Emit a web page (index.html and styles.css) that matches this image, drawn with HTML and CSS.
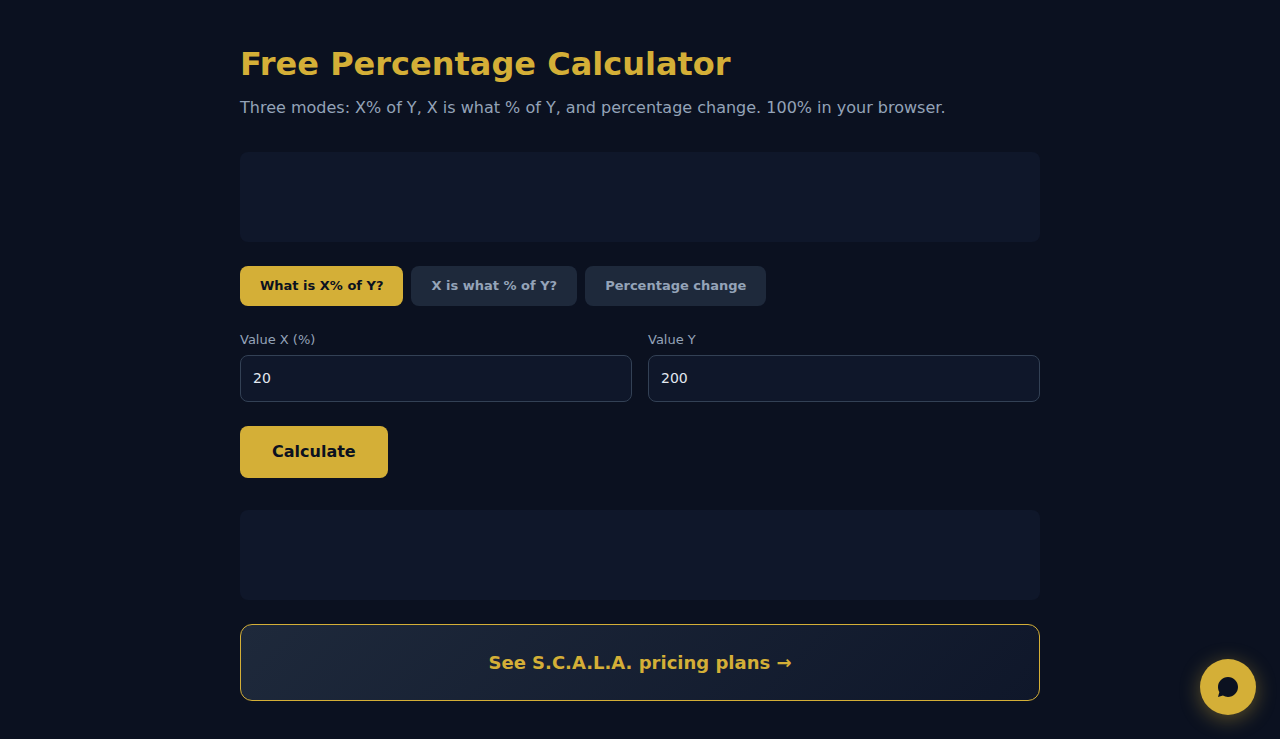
FILE: index.html
```html
<!DOCTYPE html>
<html lang="en">
<head>
<meta charset="UTF-8">
<meta name="viewport" content="width=device-width, initial-scale=1.0">
<title>Free Percentage Calculator</title>
<link rel="stylesheet" href="styles.css">
</head>
<body>

<main class="container">
    <h1>Free Percentage Calculator</h1>
    <p class="subtitle">Three modes: X% of Y, X is what % of Y, and percentage change. 100% in your browser.</p>

    <div class="ad-slot"></div>

    <!-- Mode tabs -->
    <div class="tabs">
        <button type="button" class="tab active" data-x="Value X (%)" data-y="Value Y">What is X% of Y?</button>
        <button type="button" class="tab" data-x="Value X" data-y="Value Y">X is what % of Y?</button>
        <button type="button" class="tab" data-x="From" data-y="To">Percentage change</button>
    </div>

    <form id="calc">
        <div class="row">
            <div class="field">
                <label for="x" id="label-x">Value X (%)</label>
                <input type="number" id="x" value="20" step="any">
            </div>
            <div class="field">
                <label for="y" id="label-y">Value Y</label>
                <input type="number" id="y" value="200" step="any">
            </div>
        </div>
        <button type="submit" class="btn">Calculate</button>
        <output class="result" id="result" for="x y"></output>
    </form>

    <div class="ad-slot"></div>

    <a href="#pricing" class="cta">See S.C.A.L.A. pricing plans →</a>
</main>

<!-- Chat button -->
<button type="button" class="chat-btn" aria-label="Open chat">
    <svg width="24" height="24" viewBox="0 0 24 24" fill="currentColor" aria-hidden="true">
        <path d="M12 2C6.48 2 2 6.48 2 12c0 1.85.5 3.58 1.38 5.06L2 22l4.94-1.38C8.42 21.5 10.15 22 12 22c5.52 0 10-4.48 10-10S17.52 2 12 2z"/>
    </svg>
</button>

<script>
const tabs = document.querySelectorAll(".tab");
const result = document.getElementById("result");
let mode = 0;

tabs.forEach((tab, i) => {
    tab.addEventListener("click", () => {
        tabs.forEach(t => t.classList.remove("active"));
        tab.classList.add("active");
        document.getElementById("label-x").textContent = tab.dataset.x;
        document.getElementById("label-y").textContent = tab.dataset.y;
        result.textContent = "";
        mode = i;
    });
});

document.getElementById("calc").addEventListener("submit", e => {
    e.preventDefault();
    const x = parseFloat(document.getElementById("x").value);
    const y = parseFloat(document.getElementById("y").value);
    let value = x * y / 100;
    if (mode === 1) value = x / y * 100;
    if (mode === 2) value = (y - x) / x * 100;
    result.textContent = Number.isFinite(value) ? value.toFixed(2) + (mode ? "%" : "") : "-";
});
</script>

</body>
</html>
```
FILE: styles.css
```css
:root {
    --gold: #d4af37;
    --bg: #0b1120;
    --panel: #0f172a;
    --slate: #1e293b;
    --border: #334155;
    --muted: #94a3b8;
    --text: #e2e8f0;
    --radius: 8px;
}

* {
    box-sizing: border-box;
}

body {
    margin: 0;
    font-family: "DejaVu Sans", sans-serif;
    background: var(--bg);
    color: var(--text);
    line-height: 1.5;
}

.container {
    max-width: 848px;
    margin: 0 auto;
    padding: 40px 24px 32px;
}

h1 {
    margin: 0 0 8px;
    font-size: 32px;
    color: var(--gold);
}

.subtitle {
    margin: 0 0 32px;
    color: var(--muted);
}

.ad-slot {
    min-height: 90px;
    margin: 0 0 24px;
    background: var(--panel);
    border-radius: var(--radius);
}

.tabs {
    display: flex;
    flex-wrap: wrap;
    gap: 8px;
    margin-bottom: 24px;
}

button {
    font-family: inherit;
    border: none;
    cursor: pointer;
}

.tab {
    height: 40px;
    padding: 0 20px 2px;
    font-size: 13px;
    font-weight: 600;
    color: var(--muted);
    background: var(--slate);
    border-radius: var(--radius);
}

.tab.active {
    color: var(--bg);
    background: var(--gold);
}

.row {
    display: grid;
    grid-template-columns: 1fr 1fr;
    gap: 16px;
    margin-bottom: 24px;
}

label {
    display: block;
    margin-bottom: 6px;
    font-size: 13px;
    line-height: 19px;
    color: var(--muted);
}

input {
    display: block;
    width: 100%;
    height: 47px;
    padding: 0 12px 2px;
    font-family: inherit;
    font-size: 14px;
    color: var(--text);
    background: var(--panel);
    border: 1px solid var(--border);
    border-radius: var(--radius);
}

.btn {
    height: 52px;
    padding: 0 32px 2px;
    font-size: 16px;
    font-weight: 700;
    color: var(--bg);
    background: var(--gold);
    border-radius: var(--radius);
}

.result {
    display: block;
    margin: 16px 0;
    font-size: 24px;
    font-weight: 700;
    color: var(--gold);
}

.cta {
    display: block;
    padding: 24px;
    font-size: 18px;
    font-weight: 700;
    text-align: center;
    text-decoration: none;
    color: var(--gold);
    background: linear-gradient(135deg, var(--slate), var(--panel));
    border: 1px solid var(--gold);
    border-radius: 12px;
}

/* Floats over the page */
.chat-btn {
    position: fixed;
    right: 24px;
    bottom: 24px;
    display: flex;
    align-items: center;
    justify-content: center;
    width: 56px;
    height: 56px;
    padding: 0;
    color: var(--bg);
    background: var(--gold);
    border-radius: 50%;
    box-shadow: 0 4px 20px rgba(212, 175, 55, 0.4);
}

@media (max-width: 600px) {
    .row {
        grid-template-columns: 1fr;
    }
}
```
